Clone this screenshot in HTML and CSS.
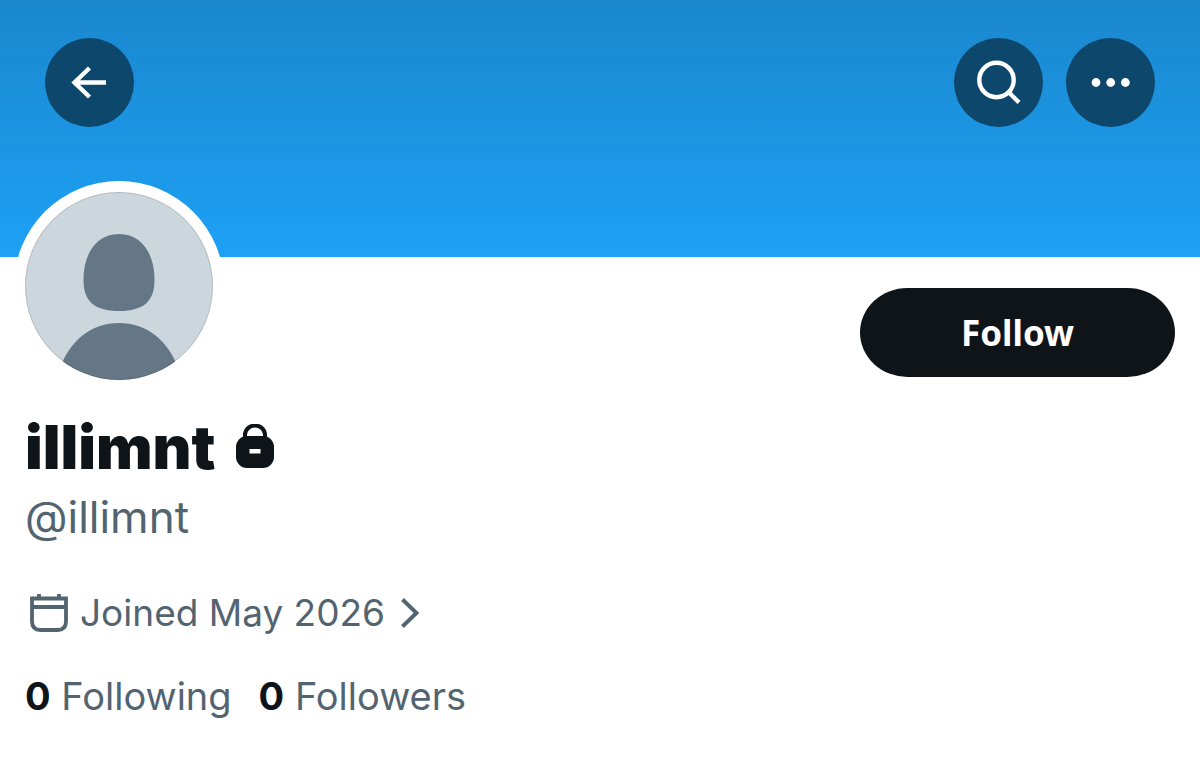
FILE: index.html
```html
<!DOCTYPE html>
<html lang="en">
<head>
<meta charset="utf-8">
<meta name="viewport" content="width=device-width, initial-scale=1">
<title>illimnt</title>
<link rel="stylesheet" href="styles.css">
</head>
<body>
<header class="banner">
  <button class="round" type="button" aria-label="Back">
    <svg viewBox="0 0 89 89"><path d="M61 44.500H30M44.500 30L29.500 44.500L44.500 59" stroke-width="4.400"/></svg>
  </button>
  <div class="banner-actions">
    <button class="round" type="button" aria-label="Search">
      <svg viewBox="0 0 89 89"><circle cx="42.500" cy="42" r="17.200" stroke-width="4.400"/><path d="M54.500 54L65 64.500" stroke-width="4.400"/></svg>
    </button>
    <button class="round" type="button" aria-label="More">
      <svg viewBox="0 0 89 89"><g fill="#fff" stroke="none"><circle cx="30" cy="44.500" r="4.400"/><circle cx="44.700" cy="44.500" r="4.400"/><circle cx="59.400" cy="44.500" r="4.400"/></g></svg>
    </button>
  </div>
</header>
<main class="profile">
  <div class="top">
    <div class="avatar">
      <svg viewBox="0 0 188 188" role="img" aria-label="Profile picture">
        <defs><clipPath id="disc"><circle cx="94" cy="94" r="94"/></clipPath></defs>
        <g clip-path="url(#disc)">
          <rect width="188" height="188" fill="#ccd6dd"/>
          <path d="M94 42C117 42 129.500 62 129.500 88C129.500 109 119 119 94 119C69 119 58.500 109 58.500 88C58.500 62 71 42 94 42Z" fill="#657786"/>
          <path d="M35 176C45 148 67 131 94 131S143 148 153 176V190H35Z" fill="#657786"/>
        </g>
        <circle cx="94" cy="94" r="93.500" fill="none" stroke="#000" stroke-opacity=".12" stroke-width="1"/>
      </svg>
    </div>
    <button class="follow" type="button">Follow</button>
  </div>
  <h1 class="name">illimnt
    <svg class="lock" viewBox="0 0 40 46" role="img" aria-label="Protected account"><path d="M10 17V11a10 9.500 0 0 1 20 0V17" fill="none" stroke="#0f1419" stroke-width="4"/><rect x="1" y="12" width="38" height="32" rx="11" fill="#0f1419"/><rect x="14.500" y="25" width="11" height="4.500" fill="#fff"/></svg>
  </h1>
  <p class="handle">@illimnt</p>
  <a class="joined" href="#">
    <svg class="calendar" viewBox="0 0 40 40"><path d="M3 5.500H37V28.500Q37 37 28.500 37H11.500Q3 37 3 28.500ZM3 14H37M10 1V6M30 1V6" fill="none" stroke="#536471" stroke-width="3.800"/></svg>
    <span>Joined May 2026</span>
    <svg class="chevron" viewBox="0 0 18 30"><path d="M1.500 1.500L15.500 15L1.500 28.500" fill="none" stroke="#536471" stroke-width="4"/></svg>
  </a>
  <nav class="stats">
    <a href="#"><b>0</b> Following</a>
    <a href="#"><b>0</b> Followers</a>
  </nav>
</main>
</body>
</html>
```
FILE: styles.css
```css
* { box-sizing: border-box; }

body {
  margin: 0;
  background: #fff;
  color: #0f1419;
  font-family: Inter, Roboto, sans-serif;
}

a { color: inherit; text-decoration: none; }
button { border: 0; padding: 0; font-family: inherit; cursor: pointer; }
svg { display: block; flex: none; }

.banner {
  display: flex;
  justify-content: space-between;
  align-items: flex-start;
  height: 257px;
  padding: 38px 45px;
  background: linear-gradient(#1a87cd, #1da1f5);
}

.banner-actions { display: flex; gap: 23px; }

.round {
  width: 89px;
  height: 89px;
  border-radius: 50%;
  background: #0d476b;
}

.round svg { width: 89px; height: 89px; fill: none; stroke: #fff; }

.profile { padding: 0 25px 24px; }

.top {
  display: flex;
  justify-content: space-between;
  align-items: flex-start;
}

.avatar {
  margin: -76px 0 0 -11px;
  padding: 11px;
  border-radius: 50%;
  background: #fff;
}

.avatar svg { width: 188px; height: 188px; }

.follow {
  width: 315px;
  height: 89px;
  margin-top: 31px;
  border-radius: 48px / 45px;
  background: #0f1419;
  color: #fff;
  font-family: "Noto Sans", sans-serif;
  font-size: 35px;
  font-weight: 700;
}

.name {
  display: flex;
  align-items: center;
  gap: 19px;
  margin: 10px 0 0;
  font-size: 60px;
  font-weight: 900;
  line-height: 92px;
}

.lock { width: 40px; height: 46px; }

.handle {
  margin: -4px 0 0;
  color: #536471;
  font-size: 44px;
  line-height: 56px;
}

.joined {
  display: flex;
  align-items: center;
  gap: 11px;
  margin: 40px 0 0 4px;
  color: #536471;
  font-size: 37px;
  line-height: 56px;
}

.calendar { width: 40px; height: 40px; }
.chevron { width: 18px; height: 30px; margin-left: 5px; }

.stats {
  display: flex;
  gap: 27px;
  margin-top: 27px;
  color: #536471;
  font-size: 38px;
  line-height: 56px;
}

.stats b { color: #0f1419; }
```
